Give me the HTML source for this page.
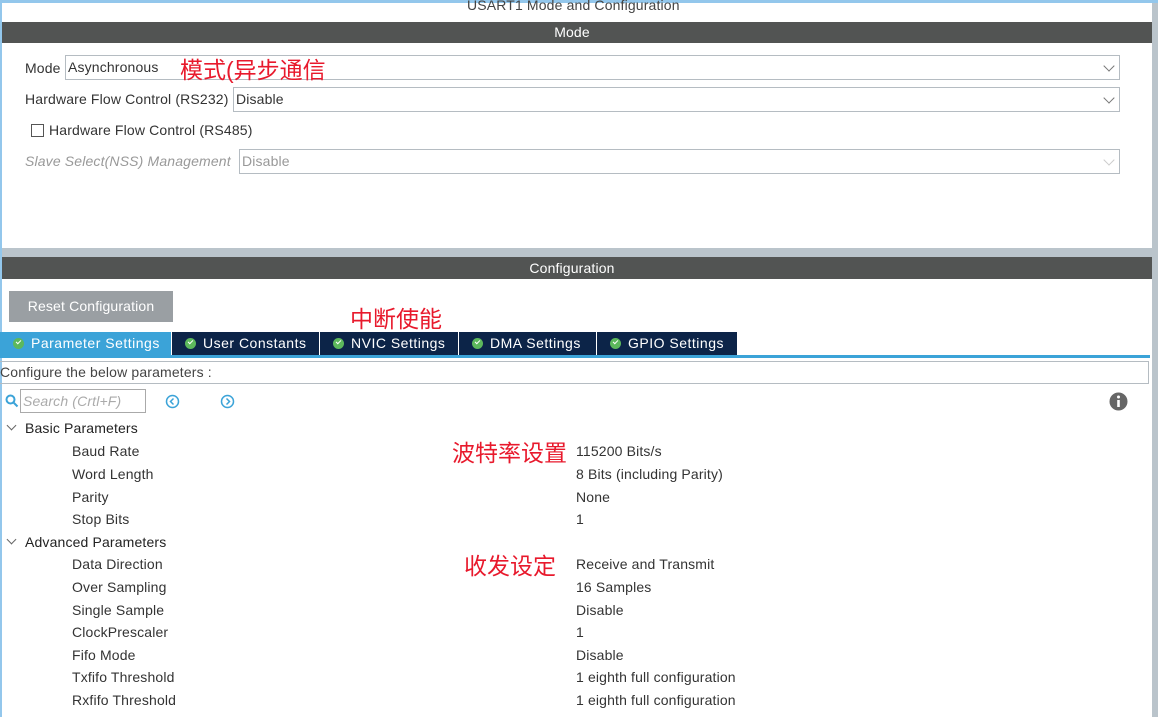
<!DOCTYPE html>
<html><head><meta charset="utf-8"><style>
*{margin:0;padding:0;box-sizing:border-box}
body{width:1158px;height:717px;overflow:hidden;background:#fff;font-family:"Liberation Sans","Noto Sans CJK SC",sans-serif;font-size:14px;color:#333;position:relative;letter-spacing:0.15px}
.a{position:absolute;white-space:nowrap}
.bar{position:absolute;left:2px;right:6px;padding-right:10px;background:#525453;color:#fff;text-align:center;font-size:14px}
.sel{position:absolute;border:1px solid #b5bcc2;background:#fff;height:25px;padding-left:2px;line-height:23px}
.chev{position:absolute;right:6px;top:6px;width:8px;height:8px;border-right:1.3px solid #777;border-bottom:1.3px solid #777;transform:rotate(45deg)}
.red{color:#e8192c;font-size:23px;letter-spacing:0}
.tab{position:absolute;top:332px;height:23px;background:#0c2448;color:#fff;line-height:23px;padding-left:13px;border-right:1px solid #fff;letter-spacing:0.5px}
.ck{display:inline-block;width:11px;height:11px;border-radius:50%;background:#5cb85c;vertical-align:-1px;margin-right:7px;position:relative}
.ck:after{content:"";position:absolute;left:3px;top:2px;width:4px;height:2px;border-left:1.5px solid #fff;border-bottom:1.5px solid #fff;transform:rotate(-45deg)}
.row{position:absolute;left:72px}
.val{position:absolute;left:576px}
.tw{position:absolute;left:8px;width:7px;height:7px;border-right:1px solid #666;border-bottom:1px solid #666;transform:rotate(45deg)}
</style></head><body>
<div class="a" style="left:0;top:0;width:1158px;height:3px;background:#93c7ec"></div>
<div class="a" style="left:0;top:0;width:2px;height:717px;background:#93c7ec"></div>
<div class="a" style="left:1152px;top:3px;width:6px;height:714px;background:#bac4cb"></div>
<div class="a" style="left:2px;top:248px;width:1156px;height:9px;background:#bac4cb"></div>
<div class="a" style="left:467px;top:-3px;color:#444">USART1 Mode and Configuration</div>
<div class="bar" style="top:22px;height:21px;line-height:21px">Mode</div>
<div class="a" style="left:25px;top:60px">Mode</div>
<div class="sel" style="left:65px;top:55px;width:1055px">Asynchronous<div class="chev"></div></div>
<div class="a red" style="left:180px;top:51px">模式(异步通信</div>
<div class="a" style="left:25px;top:91px">Hardware Flow Control (RS232)</div>
<div class="sel" style="left:233px;top:87px;width:887px">Disable<div class="chev"></div></div>
<div class="a" style="left:31px;top:124px;width:13px;height:13px;border:1px solid #555"></div>
<div class="a" style="left:49px;top:122px">Hardware Flow Control (RS485)</div>
<div class="a" style="left:25px;top:153px;color:#999;font-style:italic">Slave Select(NSS) Management</div>
<div class="sel" style="left:239px;top:149px;width:881px;color:#999">Disable<div class="chev" style="border-color:#ccc"></div></div>
<div class="bar" style="top:257px;height:22px;line-height:22px">Configuration</div>
<div class="a" style="left:9px;top:291px;width:164px;height:31px;background:#9a9fa3;color:#fff;line-height:31px;text-align:center">Reset Configuration</div>
<div class="a red" style="left:350px;top:300px">中断使能</div>
<div class="tab" style="left:0;width:172px;background:#3ba3d8"><span class="ck"></span>Parameter Settings</div>
<div class="tab" style="left:172px;width:148px"><span class="ck"></span>User Constants</div>
<div class="tab" style="left:320px;width:139px"><span class="ck"></span>NVIC Settings</div>
<div class="tab" style="left:459px;width:138px"><span class="ck"></span>DMA Settings</div>
<div class="tab" style="left:597px;width:141px"><span class="ck"></span>GPIO Settings</div>
<div class="a" style="left:0;top:355px;width:1150px;height:3px;background:#3ba3d8"></div>
<div class="a" style="left:0;top:361px;width:1149px;height:23px;border:1px solid #b5bcc2;border-left:none;line-height:21px;color:#444">Configure the below parameters :</div>
<svg class="a" style="left:5px;top:394px" width="14" height="14"><circle cx="5.5" cy="5.5" r="4" fill="none" stroke="#3ba3d8" stroke-width="2"/><path d="M8.5 8.5L12.5 12.5" stroke="#3ba3d8" stroke-width="2"/></svg>
<div class="a" style="left:20px;top:389px;width:126px;height:24px;border:1px solid #aaa;color:#aaa;font-style:italic;line-height:22px;padding-left:2px">Search (Crtl+F)</div>
<svg class="a" style="left:165px;top:394px" width="15" height="15"><circle cx="7.5" cy="7.5" r="6" fill="none" stroke="#3ba3d8" stroke-width="1.5"/><path d="M8.5 4.5L5.5 7.5L8.5 10.5" fill="none" stroke="#3ba3d8" stroke-width="1.5"/></svg>
<svg class="a" style="left:220px;top:394px" width="15" height="15"><circle cx="7.5" cy="7.5" r="6" fill="none" stroke="#3ba3d8" stroke-width="1.5"/><path d="M6.5 4.5L9.5 7.5L6.5 10.5" fill="none" stroke="#3ba3d8" stroke-width="1.5"/></svg>
<svg class="a" style="left:1109px;top:392px" width="19" height="19"><circle cx="9.5" cy="9.5" r="9" fill="#666"/><rect x="8.2" y="8" width="2.6" height="7" fill="#fff"/><circle cx="9.5" cy="5" r="1.5" fill="#fff"/></svg>
<div class="tw" style="top:422px"></div><div class="a" style="left:25px;top:420px;color:#222">Basic Parameters</div>
<div class="row a" style="top:443px">Baud Rate</div><div class="val a" style="top:443px">115200 Bits/s</div>
<div class="row a" style="top:466px">Word Length</div><div class="val a" style="top:466px">8 Bits (including Parity)</div>
<div class="row a" style="top:489px">Parity</div><div class="val a" style="top:489px">None</div>
<div class="row a" style="top:511px">Stop Bits</div><div class="val a" style="top:511px">1</div>
<div class="a red" style="left:452px;top:434px">波特率设置</div>
<div class="tw" style="top:536px"></div><div class="a" style="left:25px;top:534px;color:#222">Advanced Parameters</div>
<div class="a red" style="left:464px;top:547px">收发设定</div>
<div class="row a" style="top:556px">Data Direction</div><div class="val a" style="top:556px">Receive and Transmit</div>
<div class="row a" style="top:579px">Over Sampling</div><div class="val a" style="top:579px">16 Samples</div>
<div class="row a" style="top:602px">Single Sample</div><div class="val a" style="top:602px">Disable</div>
<div class="row a" style="top:624px">ClockPrescaler</div><div class="val a" style="top:624px">1</div>
<div class="row a" style="top:647px">Fifo Mode</div><div class="val a" style="top:647px">Disable</div>
<div class="row a" style="top:669px">Txfifo Threshold</div><div class="val a" style="top:669px">1 eighth full configuration</div>
<div class="row a" style="top:692px">Rxfifo Threshold</div><div class="val a" style="top:692px">1 eighth full configuration</div>
</body></html>
